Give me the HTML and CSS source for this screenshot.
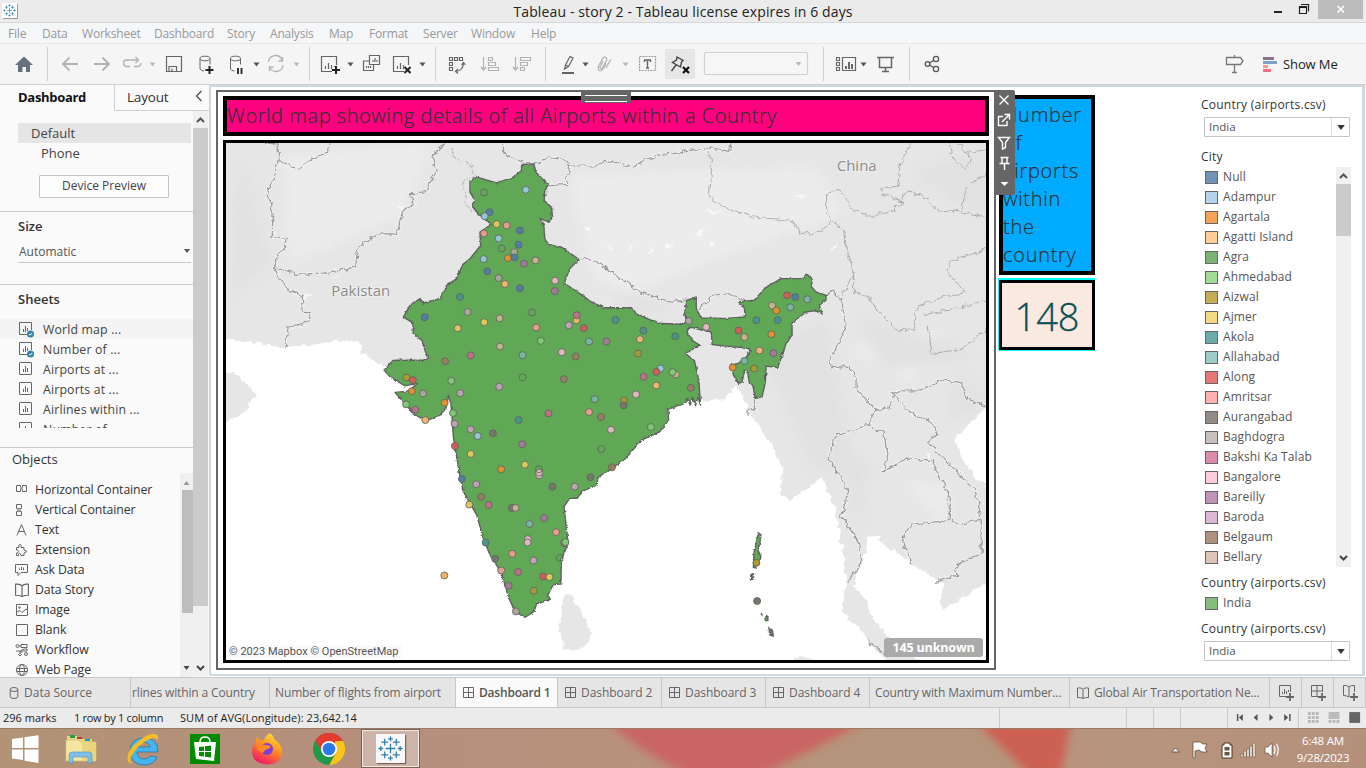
FILE: index.html
```html
<!DOCTYPE html>
<html lang="en">
<head>
<meta charset="utf-8">
<title>Tableau - story 2</title>
<link rel="stylesheet" href="styles.css">
</head>
<body>
<svg class="defs" width="0" height="0">
  <defs>
    <symbol id="arrow" viewBox="0 0 6 4"><path d="M0 0h6L3 4z"/></symbol>
    <symbol id="logo" viewBox="0 0 30 30"><g stroke="#2f7fae" stroke-width="1.3" fill="none"><path d="M15 10v10M10 15h10M9 5v7M5.500 8.500h7M21 5v7M17.500 8.500h7M9 18v7M5.500 21.500h7M21 18v7M17.500 21.500h7M15 2.500v5M12.500 5h5M15 22.500v5M12.500 25h5M5 12.500v5M2.500 15h5M25 12.500v5M22.500 15h5"/></g></symbol>
    <symbol id="sheet" viewBox="0 0 16 16"><rect x="1.500" y=".5" width="12" height="12" rx=".5" fill="none" stroke="#666"/><path d="M5.500 7v3M7.500 4v6M9.500 6v4" stroke="#666"/></symbol>
    <symbol id="used" viewBox="0 0 16 16"><path d="M9 12.500H1.500V.5h12V8" fill="none" stroke="#666"/><path d="M5.500 7v3M7.500 4v6M9.500 6v3" stroke="#666"/><circle cx="12.500" cy="12" r="3.500" fill="#3484a6"/><path d="M11 12l1.200 1.200 2-2.200" fill="none" stroke="#fff"/></symbol>
    <symbol id="grid" viewBox="0 0 11 11"><path d="M.5.5h10v10H.5zM5.500.5v10M.5 5.500h10" fill="none" stroke="#666"/></symbol>
    <symbol id="book" viewBox="0 0 12 12"><path d="M6 2.500C5 1 3 .7.5 1v9.500c2.500 0 4 .2 5.500 1 1.500-.8 3-1 5.500-1V1C9 .7 7 1 6 2.500zv9" fill="none" stroke="#666"/></symbol>
  </defs>
</svg>
<header class="titlebar">
  <svg class="applogo" viewBox="0 0 30 30"><g stroke-width="2"><use href="#logo"/></g></svg>
  <div class="wintitle">Tableau - story 2 - Tableau license expires in 6 days</div>
  <svg class="winbtns" viewBox="1266 0 100 22"><path d="M1274 12h8" stroke="#222" stroke-width="2"/><path d="M1301 4.500h7.500v7M1299.500 6.500h7v7h-7zM1299.500 7.500h7" fill="none" stroke="#222" stroke-width="1.200"/><path d="M1318 0h45v19h-45z" fill="#bcbcbc"/><path d="M1337.500 6l6.500 6.500M1344 6l-6.500 6.500" stroke="#fff" stroke-width="1.700"/></svg>
</header>
<nav class="menu"><span>File</span><span>Data</span><span>Worksheet</span><span>Dashboard</span><span>Story</span><span>Analysis</span><span>Map</span><span>Format</span><span>Server</span><span>Window</span><span>Help</span></nav>
<div class="toolbar">
  <svg class="tg w48" viewBox="0 44 48 40"><path d="M24 56.500l-9 8.500h3v7h4.500v-5h3.500v5H30v-7h3z" fill="#65717f"/></svg>
  <svg class="tg w262" viewBox="48 44 262 40" fill="none" stroke="#666">
    <g stroke="#b2b2b2" stroke-width="1.800"><path d="M78 64H63M69.500 57.500L63 64l6.500 6.500M94 64h15M102.500 57.500L109 64l-6.500 6.500"/><path d="M130 66.500h-3.500q-3-.5-3-3.500t3-3h11M135.500 57l3 3-3 3M134 66.500h4q3-.5 3-3.500" stroke-width="1.300"/></g>
    <path d="M166.500 56.500h15v15h-15zM169 71v-4.500h7.500v5M172 68.500v3" stroke-width="1.200"/>
    <ellipse cx="205" cy="58.500" rx="5" ry="2.300"/><path d="M200 58.500V69q1 2 4 2M210 58.500v6"/><path d="M209.500 66v8M205.500 70h8" stroke="#222" stroke-width="2"/>
    <ellipse cx="235.500" cy="58.500" rx="5" ry="2.300"/><path d="M230.500 58.500V69q1 2 4 2M240.500 58.500v6"/><path d="M238 68v6M241.500 68v6" stroke="#222" stroke-width="1.800"/>
    <g stroke="#b2b2b2" stroke-width="1.300"><path d="M268.500 62a7 7 0 0 1 13.500-2M283 65a7 7 0 0 1-13 3M282.500 57v4h-4M269.500 71v-4h4"/></g>
    <g stroke="none" fill="#bbb"><path d="M149.500 62.500h6l-3 4zM293.500 62.500h6l-3 4z"/><path d="M253.500 62.500h6l-3 4z" fill="#555"/></g>
  </svg>
  <svg class="tg w126" viewBox="310 44 126 40" fill="none" stroke="#666" stroke-width="1.200">
    <path d="M332 71.500h-10.500v-15h15V65M325.500 66v3M328.500 63v6M331.500 65v4M334.500 67v-1"/><path d="M336 66v8M332 70h8" stroke="#222" stroke-width="2"/>
    <path d="M369.500 55.500h10v9h-10zM369 61h-5.500v9.500h10V65M373 60v2M375 58v4M377 60v2M366.500 66v2M368.500 66v2M370.500 66v2"/>
    <path d="M404 71.500h-10.500v-15h15V65M397.500 66v3M400.500 63v6M403.500 65v4"/><path d="M404.500 67l6 6M410.500 67l-6 6" stroke="#222" stroke-width="2"/>
    <path d="M347.500 62.500h6l-3 4zM419.500 62.500h6l-3 4z" fill="#555" stroke="none"/>
  </svg>
  <svg class="tg w110" viewBox="436 44 110 40" fill="none" stroke="#666" stroke-width="1.200">
    <path d="M449.500 57.500h3v3h-3zM454.500 57.500h3v3h-3zM459.500 57.500h3v3h-3zM449.500 62.500h3v3h-3zM449.500 67.500h3v3h-3zM456 71.500q7-1 7.500-8M461.500 65l2-2.500 2 2.500M458 69l-2.500 2.500 2.500 2"/>
    <g stroke="#b2b2b2"><path d="M483.500 57v13M481 67l2.500 3 2.500-3M488.500 57.500h4v3h-4zM488.500 62.500h7v3h-7zM488.500 67.500h10v3h-10zM515.500 57v13M513 67l2.500 3 2.500-3M520.500 57.500h10v3h-10zM520.500 62.500h7v3h-7zM520.500 67.500h4v3h-4z"/></g>
  </svg>
  <svg class="tg w278" viewBox="546 44 278 40" fill="none" stroke="#666" stroke-width="1.200">
    <path d="M562 73h12" stroke-width="2"/><path d="M564.500 69l1-4 4.500-8.500 3 1.500-4.500 8.500zM565.500 65l3 1.500"/>
    <path d="M603 61l-3 6q0 2.500 2 1.500l4.500-8q1-3-1.500-3.500l-2 1-4.500 8q-1 3.500 1.500 5 2 0 3-2l3-5M611 59l-5 9" stroke="#b2b2b2"/>
    <rect x="639.500" y="56.500" width="16" height="14" stroke="#999" stroke-dasharray="2 1"/><path d="M644 60h7M647.500 60v8M644.500 60v2M650.500 60v2M646 68h3" stroke-width="1.400"/>
    <path d="M665 49h30v30h-30z" fill="#e6e6e6" stroke="none"/><path d="M677 57l6 3.500-1.500 1.500-1 5-8-4.500 4-2.500zM676 65l-4.500 6" stroke="#444" stroke-width="1.400"/><path d="M683 67l6 6M689 67l-6 6" stroke="#111" stroke-width="2.200"/>
    <rect x="704.500" y="52.500" width="103" height="22" rx="1.500" stroke="#d0d0d0" fill="#f6f6f6"/>
    <g stroke="none" fill="#bbb"><path d="M622.500 62.500h6l-3 4zM795.500 62h6l-3 4z"/><path d="M582.500 62.500h6l-3 4z" fill="#555"/></g>
  </svg>
  <svg class="tg w86" viewBox="824 44 86 40" fill="none" stroke="#666" stroke-width="1.200">
    <path d="M836.500 57.500h3v3h-3zM836.500 62.500h3v3h-3zM836.500 67.500h3v3h-3zM842.500 57.500h13v13h-13z"/><path d="M846 66v3M849 62v7M852 64v5" stroke-width="2"/><path d="M860.500 62.500h6l-3 4z" fill="#555" stroke="none"/><path d="M877 57.500h17M879.500 58v9.500h12V58M885.500 68v3M882 71.500h7" stroke-width="1.500"/>
  </svg>
  <svg class="tg w340" viewBox="910 44 340 40" fill="none" stroke="#555" stroke-width="1.300"><circle cx="927.500" cy="64" r="2.300"/><circle cx="936" cy="59" r="2.600"/><circle cx="936" cy="69" r="2.600"/><path d="M929.500 63l4-2.500M929.500 65l4 2.500"/><path d="M1226.500 57.500h14l2.500 3.500-2.500 3.500h-14zM1234.500 55v2M1234.500 65v7M1232 72.500h5" stroke="#777"/></svg>
  <div class="showme"><svg viewBox="0 0 15 15" width="15" height="15"><path d="M0 0h11v3H0z" fill="#87709a"/><path d="M0 4h14v3H0z" fill="#7fa0cb"/><path d="M0 8h5v3H0z" fill="#f4a07b"/><path d="M0 12h8v3H0z" fill="#f7707f"/></svg>Show Me</div>
</div>
<main class="work">
  <aside class="side">
    <div class="sidetabs"><b>Dashboard</b><span>Layout</span><i><svg width="8" height="12" viewBox="0 0 8 12"><path d="M6.500 1l-5 5 5 5" fill="none" stroke="#555" stroke-width="1.400"/></svg></i></div>
    <div class="sidebody">
      <div class="sidemain">
        <div class="default">Default</div>
        <div class="phone">Phone</div>
        <div class="preview">Device Preview</div>
        <section class="size"><h3>Size</h3><div class="auto">Automatic<svg width="8" height="4"><use href="#arrow"/></svg></div></section>
        <section class="sheets"><h3>Sheets</h3>
          <ul><li class="hl"><svg><use href="#used"/></svg>World map ...</li><li><svg><use href="#used"/></svg>Number of ...</li><li><svg><use href="#sheet"/></svg>Airports at ...</li><li><svg><use href="#sheet"/></svg>Airports at ...</li><li><svg><use href="#sheet"/></svg>Airlines within ...</li><li><svg><use href="#sheet"/></svg>Number of</li></ul>
        </section>
        <section class="objects"><h3>Objects</h3>
          <div class="objrow"><ul>
            <li><svg viewBox="0 0 14 14"><path d="M1.500 2.500h4v6h-4zM7.500 2.500h4v6h-4z"/><path d="M5 4h3v3H5z" fill="#aaa" stroke="none"/></svg>Horizontal Container</li>
            <li><svg viewBox="0 0 14 14"><path d="M1.500 1.500h5v4h-5zM1.500 8.500h5v4h-5z"/><path d="M2 5.500h4v3H2z" fill="#aaa" stroke="none"/></svg>Vertical Container</li>
            <li><svg viewBox="0 0 14 14"><path d="M2 12.500L6.500 1.500l4.500 11M3.500 8.500h6"/></svg>Text</li>
            <li><svg viewBox="0 0 14 14"><path d="M1.500 4.500h2.500q-1-3 1-3t1 3h3v2.500l3 1.500-3 1.500v2.500H6q0-2-1.500-2t-1 2h-2V10q2 0 2-1.500t-2-1.500z"/></svg>Extension</li>
            <li><svg viewBox="0 0 14 14"><path d="M.5 1.500h12v8H6l-3 3v-3H.5z"/><path d="M4.500 7V5.500M6.500 7V4M8.500 7V4.500"/></svg>Ask Data</li>
            <li><svg viewBox="0 0 12 12"><use href="#book"/></svg>Data Story</li>
            <li><svg viewBox="0 0 14 14"><path d="M1.500 1.500h11v11h-11zM2 9l3-1.500 2 2L11 6l1.500 1"/><circle cx="4.500" cy="4.500" r=".8"/></svg>Image</li>
            <li><svg viewBox="0 0 14 14"><path d="M1.500 1.500h11v11h-11z"/></svg>Blank</li>
            <li><svg viewBox="0 0 14 14"><circle cx="2.500" cy="3" r="1.500"/><circle cx="11" cy="11" r="1.500"/><path d="M6 1.500h6v3H6zM4 3h2M1 8h4v3M5 8l4-2h3v2H7l-2 3M3 11l2 2 2-2"/></svg>Workflow</li>
            <li><svg viewBox="0 0 14 14"><circle cx="7" cy="7" r="5.500"/><ellipse cx="7" cy="7" rx="2.500" ry="5.500"/><path d="M1.500 5.500h11M1.500 8.500h11"/></svg>Web Page</li>
          </ul><div class="objbar"><svg width="7" height="4" viewBox="0 0 6 4"><path d="M0 4h6L3 0z" fill="#999"/></svg><i></i><svg width="7" height="4" viewBox="0 0 6 4"><path d="M0 0h6L3 4z" fill="#444"/></svg></div></div>
        </section>
      </div>
      <div class="sidebar"><svg width="9" height="6" viewBox="0 0 9 6"><path d="M1 5l3.500-3.500L8 5" fill="none" stroke="#555" stroke-width="2"/></svg><i></i><svg width="9" height="6" viewBox="0 0 9 6"><path d="M1 1l3.500 3.500L8 1" fill="none" stroke="#444" stroke-width="2"/></svg></div>
    </div>
  </aside>
  <div class="canvas">
    <div class="selected">
      <div class="grip"></div>
      <div class="tools"><svg width="21" height="105" viewBox="994 90 21 105" fill="none" stroke="#fff" stroke-width="1.400"><path d="M999.500 95.500l9 9M1008.500 95.500l-9 9M1003 116.500h-4.500v9h8.500V121M1002 122l7-7M1004.500 114.500h5v5M998.500 137.500h11l-4 5v5l-3 1.500v-6.500zM1000.500 157.500h8M1002 158v5.500M1007 158v5.500M999.500 163.500h10M1004.500 164v6"/><path d="M1000.500 182h8l-4 4z" fill="#fff" stroke="none"/></svg></div>
      <h1 class="maptitle">World map showing details of all Airports within a Country</h1>
      <div class="map">
        <svg class="mapsvg" viewBox="226.300 142.400 760 518">
          <defs>
            <filter id="rough" x="-5%" y="-5%" width="110%" height="110%"><feTurbulence type="fractalNoise" baseFrequency=".16" numOctaves="2" seed="4"/><feDisplacementMap in="SourceGraphic" scale="7" xChannelSelector="R" yChannelSelector="G"/></filter>
            <filter id="fine" x="-5%" y="-5%" width="110%" height="110%"><feTurbulence type="fractalNoise" baseFrequency=".3" numOctaves="2" seed="9"/><feDisplacementMap in="SourceGraphic" scale="3" xChannelSelector="R" yChannelSelector="G"/></filter>
            <filter id="soft"><feGaussianBlur stdDeviation="14"/></filter>
            <clipPath id="landclip"><path d="M0 140H1560V860L1510 915 1485 950 1500 1000 1560 1090V1330L1500 1380 1460 1415 1465 1345 1397 1287 1370 1260 1335 1212 1308 1215 1285 1310 1320 1440 1420 1560H1355L1255 1420 1262 1280 1215 1050 1130 1100 1075 890 1040 800 970 845 500 700 278 715 272 683 0 675z"/></clipPath>
          </defs>
          <g filter="url(#rough)">
            <g transform="translate(225 90) scale(.4917 .3679)">
              <path class="land" d="M-20 120H1580V840L1552 860 1510 915 1485 950 1500 1000 1525 1050 1580 1110V1320L1552 1340 1500 1380 1460 1415 1455 1390 1465 1345 1420 1310 1397 1287 1370 1260 1335 1230 1335 1212 1308 1215 1305 1260 1285 1310 1282 1350 1305 1390 1320 1440 1350 1490 1400 1540 1430 1570H1355L1330 1530 1310 1500 1290 1460 1255 1420 1265 1340 1262 1280 1250 1200 1240 1130 1215 1050 1190 1080 1150 1115 1130 1100 1135 1030 1120 980 1075 890 1060 850 1040 800 1020 840 970 845 900 820 500 700 400 745 320 745 278 715 272 683 225 680 180 692 120 698 -20 670zM-20 765L20 770 65 825 35 880 -20 915zM690 1370L705 1375 730 1430 745 1475 740 1505 710 1528 688 1515 682 1470 685 1410zM1160 1540l40 10 20 20h-60z"/>
              <g clip-path="url(#landclip)"><g filter="url(#soft)">
                <path d="M120 180l300-40-60 200-230 130zM700 230l500-20 60 120-500 250zM1380 1060l100 20-20 100zM1260 700l200-60-60 160z" fill="#ececec"/><path d="M30 170l60 300-80 100zM1100 720l120-100 60 400-80 20zM1250 980l60 30-20 210zM1400 220l150-60v200zM720 510l190 80-60 20zM1290 620l250 100-200 40zM1500 760l60 100-90 40z" fill="#e1e1e1"/>
              </g></g>
              <g class="patch"><path d="M730 370l15 8-5 8zM780 420l15 3-10 10zM820 415l10 8-5 15zM860 445l15-25-3 20zM900 415l15 10-20 8zM950 390l25-15-5 20zM985 415l15-5-5 15zM1160 290l20-12-5 20zM980 325l30 3-20 10zM350 320l10-12v20zM215 510l25-5-20 10zM155 550l20 5-15 15zM1435 1010l-8-25 8 5zM1230 435l20-20-3 12z"/></g>
            </g>
          </g>
          <g class="glow" filter="url(#rough)"><use href="#borders"/></g>
          <g class="lines" filter="url(#rough)"><g id="borders" transform="translate(225 90) scale(.4917 .3679)">
            <path d="M80 143L107 145 108 180 100 235 85 275 97 330 95 400 127 405 98 480M108 190L150 215 175 185 210 165 213 143M98 480L145 500 200 497 265 480 270 425 310 390 350 390 360 330 385 310 378 280 410 275 415 255 430 220 420 180 448 143M98 480L125 540 157 560 158 603 172 605 168 630 128 645 121 698"/>
            <path d="M563 143L572 175 603 195M628 200L660 180 700 195 695 255 650 260M700 205L760 205 775 190 830 205 880 175 985 155 1028 165 1030 143M720 460L745 455 790 500 850 550 900 575 940 570M965 600L990 560 1030 555 1060 572"/>
            <path d="M1225 560L1235 545 1255 570 1265 640 1250 690 1230 735 1235 755 1270 750 1285 780 1285 810 1325 870 1355 860 1360 820 1410 820 1465 785 1500 800 1515 845 1552 860M1325 870L1310 910 1245 940 1228 1000 1270 1090 1255 1160 1290 1230 1295 1290 1268 1340M1310 910L1340 930 1350 990 1340 1040 1390 1000 1440 1010 1475 1100 1475 1170M1360 830L1400 880 1440 900 1450 935 1430 960 1470 1010 1530 1090 1540 1170 1500 1180 1480 1170 1400 1180 1380 1220 1397 1290M1540 1170V1260L1490 1290V1320L1445 1340M1065 885L1065 865 1078 870V840M1310 1500L1330 1515 1340 1540"/>
            <g class="thin"><path d="M460 155L462 180 500 200 510 235 485 245 490 310 525 345M655 262L650 300 668 330" stroke-dasharray="2 1"/>
            <path d="M985 165L990 185 990 240 985 290 1010 315 1080 345 1130 350 1165 365 1170 385 1195 390 1225 375 1232 350 1225 330V280L1250 268 1280 325 1320 345 1335 330 1350 335 1380 305 1365 290M1395 143L1375 200 1370 260 1335 265 1340 280 1375 300 1390 270 1430 295 1450 325 1500 330 1510 260 1552 225M1475 143L1480 180 1505 215 1520 190 1495 143M1232 350L1265 385 1265 430 1280 500V550L1310 560 1330 600 1370 655 1400 650 1410 590 1460 565 1505 550 1495 530 1470 490 1480 460 1520 445 1552 430M1420 610L1490 595 1552 570M1430 640L1440 715 1500 705 1552 650M1255 560L1280 500M1500 330L1552 345M1510 170L1552 160M1265 430L1262 380"/></g>
          </g></g>
          <g filter="url(#fine)"><path class="india" d="M521.700 164L534 163.300 536 171.700 548.300 184.300 545 190 544.300 200 551.700 206.700 552.700 216.700 549.300 221.700 544.300 220 540 217.700 544 225 545 238.300 548.300 244 561.700 246.700 579 259 570 268.300 564.300 282.700 580 293.300 593.300 302.700 605 307.500 631.700 307.300 636.700 313.300 650 319.300 661.700 323.300 681.700 324 687.300 321.700 685 313.300 687.300 300 696.700 296.700 696.700 308.300 701.700 317.700 726.700 318.300 745.700 316.700 745 307.700 739.300 301.700 755 300 766.700 286.700 781.700 278.300 803.300 278.300 807.300 273.300 813.300 280 811.700 286 816.700 291.700 826.700 295V300L820 305 822.700 313.300 816.700 310 806.700 311.700 792.700 322.700V335L786.700 343.300 778.300 367.300 766.700 366 766 381.700 762.700 396.700 756 398.300 753.300 385 750 383 748.300 371.700 745 370 742.700 381.700 739.300 383.300 734 375 731.700 365 738.300 363.300 746.700 357.300 751.700 350 746.700 347.700 728.300 346 712.700 344.300 711.700 331.700 703.300 330 690 326.700 687.300 331.700 693.300 340.700 700 345 686 353.300 695 360.700 699.300 380 701 405 698.500 397 696 405.500 693 397 690.500 405 688 398 685 403.300 668.300 409.300 669 420 660 431.700 641.700 440 625 459.500 612.300 468.300 598.300 477.300 597.300 485 581.700 491.700 577.700 498.300 570 498.300 564.300 506.700 566.700 530 568.300 543.300 561.700 560 561 584 553.300 585 547.700 596 551.700 599.300 536.700 604.300 534.300 611.700 525 617.700 515 611.700 508.300 596.700 501.700 573.300 490 555 483.300 538.300 476.700 515 463.300 491.700 460 476.700 453.300 436.700 451 403.300 447.700 394.300 446 408.300 440 415 425.700 421 413.300 413.300 395 392.300 408.300 391 417.300 383.300 405 385.700 390 376.700 384 370 390 363.300 393.300 360 423.300 360 427.700 358.300 421.700 340 413.300 333.300 412.700 322.700 403.300 316.700 410 305 420 298.300 423.300 302.700 440 298.300 446.700 285 456.700 278.300 462.700 264.300 470 258.300 480.700 245 480 231.700 491.700 224 478.300 213.300 471.700 205 475 200 470 191.700V180L476.700 176.700 496.700 182.300 513.300 176.700 521.700 170z"/>
          <path class="india" d="M759 533l2.500 2-1 8-2 7 3 7-2 7-3-1v5h-2.500l.5-14 2-10zM751.500 575l2.500-1v5l-3 1zM761.500 613.500l1.500 2.500M765.500 617.500l3-1v4.500h-2.500zM769.500 627.500l3.500 3 1 6-3.500-1z"/></g>
          <g id="dots" class="dots"></g>
          <text class="country" x="331" y="295.500" textLength="59" lengthAdjust="spacingAndGlyphs">Pakistan</text>
          <text class="country" x="837.500" y="170.500" textLength="40" lengthAdjust="spacingAndGlyphs">China</text>
        </svg>
        <div class="credit">© 2023 Mapbox © OpenStreetMap</div>
        <div class="unknown">145 unknown</div>
      </div>
    </div>
    <div class="counts">
      <div class="counttitle">Number<br>of<br>airports<br>within<br>the<br>country</div>
      <div class="count">148</div>
    </div>
    <div class="filters">
      <h4>Country (airports.csv)</h4>
      <div class="select"><span>India</span><i><svg width="8" height="5"><use href="#arrow"/></svg></i></div>
      <h4 class="city">City</h4>
      <div class="legend"><ul id="cities"></ul><div class="legbar"><svg width="9" height="6" viewBox="0 0 9 6"><path d="M1 5l3.500-3.500L8 5" fill="none" stroke="#555" stroke-width="2"/></svg><i></i><svg width="9" height="6" viewBox="0 0 9 6"><path d="M1 1l3.500 3.500L8 1" fill="none" stroke="#444" stroke-width="2"/></svg></div></div>
      <h4 class="c2">Country (airports.csv)</h4>
      <ul class="one"><li><i class="india-key"></i>India</li></ul>
      <h4 class="c3">Country (airports.csv)</h4>
      <div class="select"><span>India</span><i><svg width="8" height="5"><use href="#arrow"/></svg></i></div>
    </div>
  </div>
</main>
<div class="tabs">
  <div class="t1"><svg width="10" height="12" viewBox="0 0 10 12" fill="none" stroke="#666"><ellipse cx="5" cy="2.500" rx="3.800" ry="2"/><path d="M1.200 2.500v7q0 2 3.800 2t3.800-2v-7"/></svg>Data Source</div>
  <div class="t2">rlines within a Country</div><div class="t3">Number of flights from airport</div>
  <div class="t4 on"><svg width="11" height="11"><use href="#grid"/></svg>Dashboard 1</div>
  <div class="t5"><svg width="11" height="11"><use href="#grid"/></svg>Dashboard 2</div>
  <div class="t5"><svg width="11" height="11"><use href="#grid"/></svg>Dashboard 3</div>
  <div class="t5"><svg width="11" height="11"><use href="#grid"/></svg>Dashboard 4</div>
  <div class="t8">Country with Maximum Number...</div>
  <div class="t9"><svg width="12" height="12"><use href="#book"/></svg>Global Air Transportation Ne...</div>
  <div class="add"><svg width="18" height="18" viewBox="0 0 18 18" fill="none" stroke="#666"><path d="M10 12.500H2.500v-11h11V8M5.500 8v2M7.500 5v5M9.500 7v3M11.500 6v2"/><path d="M13 9v8M9 13h8" stroke-width="1.800"/></svg></div>
  <div class="add"><svg width="18" height="18" viewBox="0 0 18 18" fill="none" stroke="#666"><path d="M10 12.500H2.500v-11h11V8M8 1.500v11M2.500 7h11"/><path d="M13 9v8M9 13h8" stroke-width="1.800"/></svg></div>
  <div class="add"><svg width="18" height="18" viewBox="0 0 18 18" fill="none" stroke="#666"><path d="M8 3Q6 1 2.500 1.500v10q3 0 5.500 1.500V3q2-2 5.500-1.500V8"/><path d="M13 9v8M9 13h8" stroke-width="1.800"/></svg></div>
</div>
<div class="status">
  <span class="s1">296 marks</span><span class="s2">1 row by 1 column</span><span class="s3">SUM of AVG(Longitude): 23,642.14</span>
  <i class="c127"></i><i class="c27"></i><i class="c27"></i><i class="c47"></i>
  <svg class="c71" viewBox="1227 708 71 20" fill="#555"><path d="M1236 714h1.500v7h-1.500zM1242 714v7l-4-3.500zM1257 714v7l-4-3.500zM1269 714v7l4-3.500zM1284 714v7l4-3.500zM1289 714h1.500v7h-1.500z"/></svg>
  <svg class="c67" viewBox="1298 708 68 20" fill="#bbb"><path d="M1307 712h3v3h-3zM1311 712h3v3h-3zM1315 712h3v3h-3zM1307 716h3v3h-3zM1311 716h3v3h-3zM1315 716h3v3h-3zM1307 720h3v3h-3zM1311 720h3v3h-3zM1315 720h3v3h-3zM1328 712h11v7h-11zM1328 720h3v3h-3zM1332 720h3v3h-3zM1336 720h3v3h-3z"/><path d="M1349 712h11v11h-11z" fill="#666"/></svg>
</div>
<footer class="taskbar">
  <svg class="petals" viewBox="0 728 1366 40" preserveAspectRatio="none"><defs><filter id="b5"><feGaussianBlur stdDeviation="5"/></filter></defs><g filter="url(#b5)"><path d="M605 718H870Q820 748 745 780H705Q650 760 605 718z" fill="#c96562"/><path d="M870 720h100l70 60H760z" fill="#b4947a"/><path d="M975 720h97l-12 55h-30z" fill="#cc6153"/><path d="M1020 780l22-12 30 12z" fill="#b06c3a"/></g></svg>
  <div class="apps">
    <svg class="a1" viewBox="11 733 28 30"><path d="M12 738l11-1.500v10.500H12zM24.500 736.300l14-2v12.700h-14zM12 748.500h11V759l-11-1.500zM24.500 748.500h14V762l-14-2.300z" fill="#fff"/></svg>
    <svg class="a2" viewBox="62 732 36 34"><path d="M67 736h10l2 3h13v5H67z" fill="#e8d586"/><path d="M70 735h5v3h-5z" fill="#2a9c48"/><path d="M77 737h5v2h-5z" fill="#c33"/><path d="M85 739h5v2h-5z" fill="#29c"/><path d="M66 740h12l2 2h16v19H66z" fill="#f4e6a2" stroke="#d6bf6b" stroke-width=".7"/><path d="M82 742h14v19H82z" fill="#ead47d"/><path d="M69 763v-8q0-3 3-3h17q3 0 3 3v8h-4v-6H73v6z" fill="#80bfe3" stroke="#4c93c4" stroke-width=".6"/></svg>
    <svg class="a3" viewBox="126 730 36 36"><path d="M158 751h-21q1 7 7 7 4 0 6-3l7 1q-3 8-13 8-13 0-14-14 1-13 14-13 14 0 14 14zm-21-5h13q-1-5-6-5t-7 5z" fill="#44b5ef" stroke="#1b6fae" stroke-width=".7"/><path d="M128 760q-3-10 12-21 12-9 17-5 2 2 0 6 0-5-7-2-12 5-19 18-2 5 2 6-4 1-5-2z" fill="#f7bd26"/></svg>
    <svg class="a4" viewBox="190 733 30 30"><path d="M190 733h30v30h-30z" fill="#038a03"/><path d="M194 741h22l-2 19-18-2z" fill="#fff"/><path d="M200 741q0-5 5-5t5 5" fill="none" stroke="#fff" stroke-width="1.500"/><path d="M199 746l5-.5v4.500h-5zM205 745.300l6-.8v5.500h-6zM199 751h5v4.500l-5-.5zM205 751h6v5.500l-6-.8z" fill="#038a03"/></svg>
    <svg class="a5" viewBox="251 732 32 32"><defs><linearGradient id="ff" x1=".8" y1="0" x2=".3" y2="1"><stop offset="0" stop-color="#ffe83c"/><stop offset=".45" stop-color="#ff9020"/><stop offset="1" stop-color="#f0136c"/></linearGradient></defs><path d="M270 732q4 3 5 7 7 5 7 12 0 12-14 12.500-16-.5-16-14 0-5 3-8l2-6 3 4h4q1-5 6-7.500z" fill="url(#ff)"/><circle cx="267" cy="748" r="6" fill="#7c3fd6"/><path d="M256 745q7-2 9-1 5 0 6 2-2 2-6 3l-2 3q-5-1-7-7z" fill="#ff8a22"/></svg>
    <svg class="a6" viewBox="313 732 32 32"><circle cx="329" cy="748" r="16" fill="#21994a"/><path d="M315.100 740A16 16 0 0 1 343 740H329z" fill="#e23b30"/><path d="M315.100 740L325 756l4-8 8-8z" fill="#e23b30"/><path d="M342.900 740A16 16 0 0 1 329 764L336 752 335 740z" fill="#fcc31c"/><path d="M323 751l-8-11.500q-6 17 14 24.500l3-6z" fill="#21994a"/><circle cx="329" cy="748" r="8" fill="#fff"/><circle cx="329" cy="748" r="6.300" fill="#2c7ae8"/></svg>
    <div class="active"><svg viewBox="0 0 30 30"><use href="#logo"/></svg></div>
  </div>
  <svg class="tray" viewBox="1166 728 120 40"><path d="M1171.500 751h8l-4-4z" fill="#fff" stroke="#654"/><path d="M1193 741v16h2v-7l4-1 3 2h5l-2-4 2-4h-4l-3-2h-7z" fill="#fff" stroke="#543" stroke-width=".7"/><path d="M1224 742h6v2h2v13h-10v-13h2z" fill="#fff" stroke="#432"/><path d="M1224.500 746h5v3.500h-5zM1224.500 751h5v3.500h-5z" fill="#654"/><path d="M1241 753h2v3h-2zM1244 750h2v6h-2zM1247 748h2v8h-2zM1250 745h2v11h-2zM1253 742h2v14h-2z" fill="#fff" stroke="#543" stroke-width=".5"/><path d="M1265 746h3l4-4v14l-4-4h-3z" fill="#fff" stroke="#543" stroke-width=".6"/><path d="M1274 745q2 4 0 8M1276.500 743q3.500 6 0 12" fill="none" stroke="#fff" stroke-width="1.200"/></svg>
  <div class="clock">6:48 AM<br>9/28/2023</div>
</footer>
<script src="app.js"></script>
</body>
</html>
```

FILE: styles.css
```css
*{box-sizing:border-box}
body{margin:0;width:1366px;height:768px;overflow:hidden;background:#fff;font:12.5px/20px "Open Sans","Noto Sans",sans-serif;color:#444;display:flex;flex-direction:column}
ul{list-style:none;margin:0;padding:0}
h1,h3,h4{margin:0;font-weight:400}
svg{flex:none}
.defs{position:absolute}
.titlebar{height:23px;flex:none;background:#ebebeb;border-bottom:1px solid #d4d8dc;display:flex;justify-content:space-between}
.applogo{width:15px;height:15px;margin:3px 0 0 2px;background:#fff;box-shadow:1px 1px 0 #999}
.wintitle{font-size:14px;line-height:23px;color:#222;letter-spacing:.13px;padding-left:83px}
.winbtns{width:100px;height:22px}
.menu{height:21px;flex:none;background:#f5f6f8;border-bottom:1px solid #e6e6e6;display:grid;grid-template-columns:34px 40px 72px 73px 43px 59px 40px 54px 48px 60px 40px;padding-left:8px;font-size:12px;line-height:21px;color:#999;letter-spacing:-.2px}
.toolbar{height:40px;flex:none;background:#f5f5f5;display:flex;align-items:center}
.tg{height:40px;display:block;background:linear-gradient(#d0d0d0,#d0d0d0) right 3px/1px 34px no-repeat}
.w48{width:48px}
.w262{width:262px}
.w126{width:126px}
.w110{width:110px}
.w278{width:278px}
.w86{width:86px}
.w340{width:340px;background:none}
.showme{display:flex;align-items:center;gap:5px;padding-left:13px;font-size:13px;color:#222;letter-spacing:-.1px}
.work{height:593px;flex:none;display:flex;border-top:1px solid #d0d0d0}
.side{width:209px;background:#fafafa;display:flex;flex-direction:column;flex:none}
.sidetabs{height:26px;display:flex;font-size:13.500px;line-height:25px;color:#333}
.sidetabs b{width:114px;padding-left:18px;font-size:13px;color:#111;letter-spacing:-.3px}
.sidetabs span{width:75px;border:solid #d0d0d0;border-width:0 0 1px 1px;padding-left:12px;letter-spacing:-.2px}
.sidetabs i{flex:1;border-bottom:1px solid #d0d0d0;padding:5px 0 0 6px;line-height:1}
.sidebody{flex:1;display:flex;min-height:0}
.sidemain{width:193px;height:566px;overflow:hidden;color:#444;font-size:13px}
.default{margin:12px 2px 0 18px;height:20px;line-height:21px;background:#e5e5e5;padding-left:13px}
.phone{height:20px;line-height:21px;padding-left:41px}
.preview{margin:12px 0 0 39px;width:130px;height:23px;border:1px solid #c4c4c4;text-align:center;line-height:20px;font-size:12px;background:#fdfdfd;border-radius:1px}
.sidemain h3{font-size:13px;line-height:20px;font-weight:600;color:#333;padding-left:18px}
.size{margin-top:13px;border-top:1px solid #c8c8c8;height:73px;padding-top:4px}
.auto{margin:5px 2px 0 18px;height:22px;line-height:19px;border-bottom:1px solid #c8c8c8;display:flex;justify-content:space-between;align-items:center;font-size:12px;padding:0 0 1px 1px;color:#555}
.auto svg{fill:#555}
.sheets{border-top:1px solid #c8c8c8;height:163px;padding-top:4px}
.sheets ul{margin-top:10px;height:109px;overflow:hidden}
.sheets li{height:20px;line-height:21px;display:flex;gap:8px;padding-left:18px;font-size:12.300px;align-items:flex-start;letter-spacing:.16px}
.sheets li svg{width:16px;height:16px;margin-top:3px;margin-right:1px}
.hl{background:#f4f4f4}
.objects{border-top:1px solid #c8c8c8;height:230px;padding-top:1px}
.sidemain .objects h3{padding-left:12px;font-weight:400;line-height:21px}
.objrow{display:flex;justify-content:space-between;height:206px;margin-top:3px}
.objrow ul{padding-top:7px;font-size:12.300px;color:#333}
.objrow li{height:20px;line-height:20px;display:flex;gap:6px;padding-left:15px;align-items:center;letter-spacing:-.1px}
.objrow li svg{width:14px;height:14px;fill:none;stroke:#666}
.objbar{width:13px;background:#f0f0f0;display:flex;flex-direction:column;align-items:center;padding:8px 0 6px;height:206px}
.objbar i{width:11px;height:123px;background:#bdbdbd;margin:5px 0 53px 2px;flex:none}
.sidebar{width:15px;height:565px;background:#f0f0f0;display:flex;flex-direction:column;align-items:center;padding:6px 0}
.sidebar i{width:15px;height:478px;background:#cbcbcb;margin:5px 0 59px;flex:none}
.canvas{flex:1;border:2px solid #cdd8e1;border-right-width:3px;margin-right:1px;height:591px;display:flex;align-items:flex-start;background:#fff}
.selected{width:780px;height:580px;margin:3px 0 0 5px;border:2px solid #666;padding:4px 5px;position:relative;flex:none}
.grip{position:absolute;left:363px;top:-1px;width:50px;height:12px;background:#666;padding:4px}
.grip::before{content:"";display:block;height:5px;border:solid #fff;border-width:1px 0}
.tools{position:absolute;left:776px;top:-2px;width:21px;height:105px;background:#666;border-radius:2px;z-index:2}
.maptitle{width:766px;height:40px;background:#ff007f;border:4px solid #000;font:300 20px/31px "Open Sans",sans-serif;letter-spacing:.55px;color:#333;white-space:nowrap;-webkit-text-stroke:.2px #333}
.map{width:766px;height:523px;margin-top:4px;border:3px solid #000;position:relative}
.mapsvg{display:block;width:760px;height:517px}
.land{fill:#e6e6e6}
.patch{fill:#f8f8f8}
.glow{fill:none;stroke:#f7f7f7;stroke-width:3;opacity:.7}
.glow path,.lines path{vector-effect:non-scaling-stroke}
.lines{fill:none;stroke:#999;stroke-width:1.200}
.thin{stroke-width:.8}
.india{fill:#60a856;stroke:#606060;stroke-width:1.400;stroke-linejoin:round}
.dots circle{stroke:#626262;stroke-width:1;stroke-opacity:.85}
.country{font:14px "Open Sans",sans-serif;fill:#8c8c8c;stroke:#eee;stroke-width:2px;paint-order:stroke}
.credit{position:absolute;left:0;bottom:1px;background:#fafafa;font:11px/14px Roboto,sans-serif;color:#555;padding:0 3px 0 3px;letter-spacing:.02px}
.unknown{position:absolute;right:3px;bottom:3px;width:99px;height:19px;border-radius:3px;background:#aaa;color:#fff;font-weight:700;line-height:19px;text-align:center;font-size:12.500px;letter-spacing:-.15px}
.counts{width:97px;margin:8px 0 0 2px;flex:none}
.counttitle{margin-left:1px;width:96px;height:180px;background:#00aaff;border:4px solid #000;font:300 20px/28px "Open Sans",sans-serif;letter-spacing:.7px;color:#333;padding:2px 0 0 0;-webkit-text-stroke:.2px #333}
.count{margin:5px 0 0 1px;height:70px;border:3px solid #000;background:#f9e9e1;color:#0a4f52;font:300 38px/66px "Open Sans",sans-serif;-webkit-text-stroke:.3px #0a4f52;text-align:center;box-shadow:-1px 0 0 #0ff,-1px -2px 0 #0ff,0 -2px 0 #0ff,0 1px 0 #0ff}
.filters{margin:8px 0 0 106px;width:150px;flex:none;color:#555;font-size:12px}
.filters h4{font-size:12px;line-height:20px;color:#333;letter-spacing:.24px}
.select{margin:2px 0 0 3px;width:146px;height:20px;border:1px solid #c4c4c4;border-radius:1px;display:flex;line-height:18px;font-size:11.500px}
.select span{flex:1;padding-left:4px}
.select i{width:18px;border-left:1px solid #ddd;display:flex;align-items:center;justify-content:center}
.select svg{fill:#333}
.filters .city{margin-top:10px;height:20px}
.legend{display:flex;justify-content:space-between;height:400px}
.filters li{height:20px;display:flex;gap:5px;padding-left:4px;line-height:20px;align-items:center;letter-spacing:.1px}
.filters li i{width:13px;height:13px;border:1px solid #666}
.filters .india-key{background:#86bc80}
.legbar{width:15px;background:#f0f0f0;display:flex;flex-direction:column;align-items:center;padding:6px 0}
.legbar i{width:15px;height:52px;background:#cbcbcb;margin:5px 0 auto}
.filters .c2{margin-top:6px}
.filters .c3{margin-top:6px;height:20px}
.tabs{height:31px;flex:none;background:#e5e5e5;border-top:1px solid #c8c8c8;border-bottom:1px solid #c8c8c8;display:flex;font-size:12px;line-height:29px;color:#666;white-space:nowrap;letter-spacing:-.13px}
.tabs div{border-right:1px solid #c8c8c8;display:flex;align-items:center;gap:5px;padding-left:7px;flex:none;overflow:hidden}
.tabs .t1{width:131px;padding-left:9px;gap:5px;letter-spacing:0}
.tabs .t2{width:139px;padding-left:1px}
.tabs .t3{width:186px;padding-left:5px}
.tabs .t4{width:102px}
.tabs .t5{width:104px;letter-spacing:-.05px}
.tabs .t8{width:200px;padding-left:5px}
.tabs .t9{width:200px}
.tabs .on{background:#fafafa;font-weight:600;color:#555;letter-spacing:-.2px;line-height:27px}
.tabs .add{width:32px;padding:0 0 0 7px}
.status{height:20px;flex:none;background:#ebebeb;display:flex;font-size:11px;line-height:20px;color:#222;white-space:nowrap}
.s1{width:74px;padding-left:3px}
.s2{width:106px;letter-spacing:-.3px}
.s3{width:819px;letter-spacing:.06px}
.status i,.status svg{border-left:1px solid #ccc;height:20px}
.c127{width:127px}
.c27{width:27px}
.c47{width:47px}
.c71{width:71px}
.c67{width:68px}
.taskbar{height:40px;flex:none;background:linear-gradient(90deg,#b29375,#b58f7c 25%,#ba957d 70%,#b5917c);border-top:1px solid #9a7b66;display:flex;justify-content:space-between;position:relative}
.petals{position:absolute;inset:0;width:1366px;height:40px}
.apps,.tray,.clock{position:relative}
.apps{display:flex;align-items:center}
.a1{width:28px;height:30px;margin-left:11px}
.a2{width:36px;height:34px;margin-left:23px}
.a3{width:36px;height:36px;margin-left:28px}
.a4{width:30px;height:30px;margin-left:28px}
.a5{width:32px;height:32px;margin-left:31px}
.a6{width:32px;height:32px;margin-left:30px}
.active{width:59px;height:39px;border:1px solid #7c6153;margin-left:16px;background:#ccb5a8;box-shadow:inset 0 0 0 1px #f3e8e2;display:flex;align-items:center;justify-content:center}
.active svg{width:29px;height:29px;background:#f8f8f8;box-shadow:1px 1px 1px #765}
.tray{width:120px;height:40px;margin-left:auto}
.clock{width:80px;color:#fff;font-size:11.500px;line-height:17px;text-align:center;padding:3px 6px 0 0;letter-spacing:-.2px}
```

FILE: app.js
```js
// Mark colours, keyed by palette letter
const palette = {B:'#4f7fa3',L:'#94c6d6',O:'#e0922f',P:'#ecb66c',G:'none',g:'#7fc873',K:'#a89a32',Y:'#dcc75b',T:'#459689',t:'#78b5a3',R:'#d05d57',S:'#e89d8b',D:'#74786a',A:'#a8a89a',M:'#bd708a',p:'#e2b6bf',U:'#a27c94',u:'#bfa2b6',N:'#948061',n:'#c4b28c'};
// Marks by map region: origin plus third-of-a-pixel offsets
const regions = [
  [360,140,'G372,156 L498,148 B389,215 L374,227 Y410,251 S440,255 S372,279 B480,270 L416,294 B476,313 G425,324 A463,335 O444,353 B464,351 L371,356 U492,370 n527,360 B382,393 A416,413 P435,431 B480,444 p586,421 U585,452 T300,470 A323,515 B194,531 Y373,546 n419,534 Y293,564 G516,517 S529,562 P650,540 M651,525 u627,555 R672,564 T767,539 g543,602 t688,604 U740,604 n420,619 M332,646 t488,645 p606,636 N648,649 N255,663 K139,712 R158,720 G488,712 N612,717 g274,722 u418,740'],
  [600,250,'T131,241 P121,267 T227,258 K115,310 L183,355 R170,365 M132,380 n229,373 g219,366 P170,406 p109,433 K73,451 D72,466 N274,413 N4,501 p34,539 g154,531 G5,597 A268,212 p320,230 R417,241 n435,261 T471,210 T535,210 R563,135 B588,140 t624,147 n518,166 O531,181 t573,171 O516,252 P480,301 U522,309 t435,332 O400,352 K464,355'],
  [380,360,'O95,93 A129,100 g78,133 M106,149 P136,180 O194,128 u241,99 g219,159 u224,191 u272,208 L293,228 R225,258 Y272,282 O364,328 Y435,314 D339,220 T416,180 M506,160 U427,253 p478,346 p478,338 G477,328 D518,380 u585,380 D632,352 N697,322 S628,156 t645,117 B246,357 u289,373 N304,411 M326,435 Y268,434 D396,444 n407,444 U493,475 t449,492 S529,517 p444,538 p443,548 N553,550 g557,547 G540,594 T317,548 D346,597 S397,582 u461,602 S364,632 M415,637 R490,650 Y509,652 U386,678 K462,693 A408,755 P193,647 K1131,609 D1133,724']
];
document.getElementById('dots').innerHTML = regions.map(([ox, oy, s]) => s.split(' ').map(m => {
  const [x, y] = m.slice(1).split(',').map(Number);
  return `<circle cx="${(ox + x / 3).toFixed(1)}" cy="${(oy + y / 3).toFixed(1)}" r="3.5" fill="${palette[m[0]]}"/>`;
}).join('')).join('');

const cities = [['Null','#7193b9'],['Adampur','#b3d4ec'],['Agartala','#f5a356'],['Agatti Island','#ffcb97'],['Agra','#7ab372'],['Ahmedabad','#a3da96'],['Aizwal','#c5ac57'],['Ajmer','#f4d984'],['Akola','#6daba8'],['Allahabad','#9fcac6'],['Along','#e77879'],['Amritsar','#ffb1ae'],['Aurangabad','#938b88'],['Baghdogra','#c8c0bd'],['Bakshi Ka Talab','#dc8bab'],['Bangalore','#fccbdc'],['Bareilly','#bf94b4'],['Baroda','#dcb7d6'],['Belgaum','#b0917f'],['Bellary','#dfc4b7']];
document.getElementById('cities').innerHTML = cities.map(([name, c]) => `<li><i style="background:${c}"></i>${name}</li>`).join('');
```
